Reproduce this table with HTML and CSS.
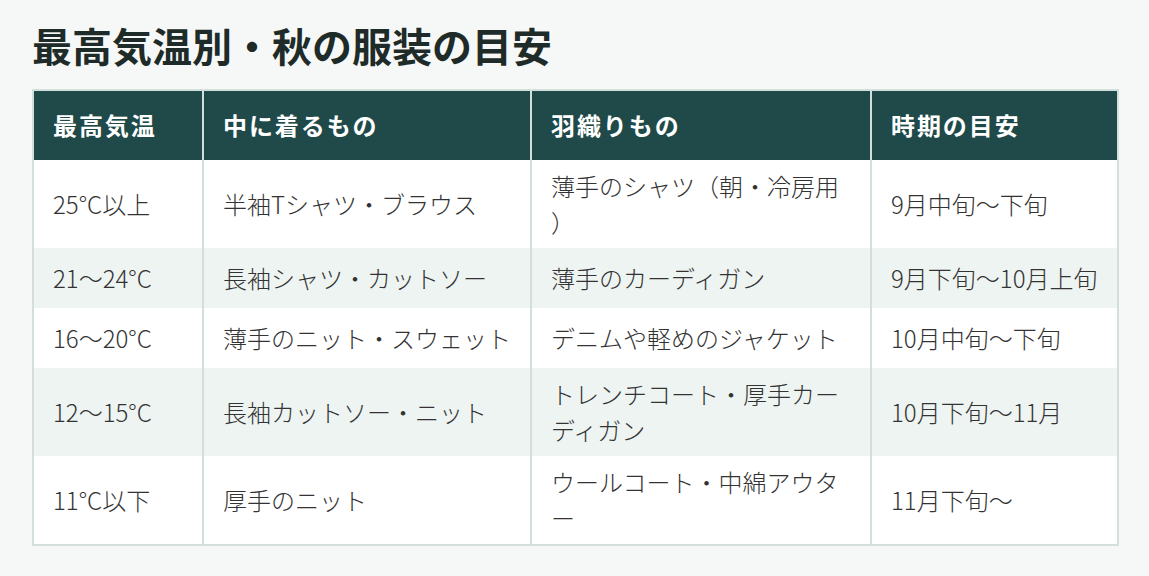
FILE: index.html
```html
<!DOCTYPE html>
<html lang="ja">
<head>
<meta charset="utf-8">
<title>最高気温別・秋の服装の目安</title>
<link rel="stylesheet" href="styles.css">
</head>
<body>
<main class="page">
  <h1 class="title">最高気温別・秋の服装の目安</h1>
  <table class="guide">
    <thead>
      <tr>
        <th class="c-temp">最高気温</th>
        <th class="c-inner">中に着るもの</th>
        <th class="c-outer">羽織りもの</th>
        <th class="c-period">時期の目安</th>
      </tr>
    </thead>
    <tbody>
      <tr>
        <td>25°C以上</td>
        <td>半袖Tシャツ・ブラウス</td>
        <td>薄手のシャツ（朝・冷房用）</td>
        <td>9月中旬〜下旬</td>
      </tr>
      <tr>
        <td>21〜24°C</td>
        <td>長袖シャツ・カットソー</td>
        <td>薄手のカーディガン</td>
        <td>9月下旬〜10月上旬</td>
      </tr>
      <tr>
        <td>16〜20°C</td>
        <td>薄手のニット・スウェット</td>
        <td>デニムや軽めのジャケット</td>
        <td>10月中旬〜下旬</td>
      </tr>
      <tr>
        <td>12〜15°C</td>
        <td>長袖カットソー・ニット</td>
        <td>トレンチコート・厚手カーディガン</td>
        <td>10月下旬〜11月</td>
      </tr>
      <tr>
        <td>11°C以下</td>
        <td>厚手のニット</td>
        <td>ウールコート・中綿アウター</td>
        <td>11月下旬〜</td>
      </tr>
    </tbody>
  </table>
</main>
</body>
</html>
```

FILE: styles.css
```css
* {
  box-sizing: border-box;
}

html, body {
  margin: 0;
  padding: 0;
  background: #f5f8f7;
}

body {
  font-family: "Noto Sans CJK JP", "Noto Sans", sans-serif;
  color: #333;
}

.page {
  padding: 21px 30px 24px 32px;
}

.title {
  margin: 0 0 20px;
  font-size: 40px;
  line-height: 1.2;
  font-weight: 700;
  letter-spacing: 0;
  color: #1f2b28;
}

.guide {
  width: 100%;
  table-layout: fixed;
  border-collapse: separate;
  border-spacing: 0;
  border: 2px solid #d3dfdb;
  background: #fff;
}

.guide th,
.guide td {
  text-align: left;
  vertical-align: middle;
  padding: 8px 19px;
  border-left: 2px solid #d3dfdb;
  line-break: anywhere;
  text-spacing-trim: space-all;
}

.guide th:first-child,
.guide td:first-child {
  border-left: 0;
}

.guide th {
  background: #1f4a49;
  color: #fff;
  font-size: 24px;
  line-height: 1.5;
  font-weight: 700;
  letter-spacing: 0.08em;
  padding-top: 16px;
  padding-bottom: 17px;
}

.guide td {
  font-size: 24px;
  line-height: 1.5;
  font-weight: 300;
  color: #333;
}

.guide tbody tr {
  height: 60px;
}

.guide tbody tr:nth-child(even) td {
  background: #eef4f2;
}

.c-temp { width: 168px; }
.c-inner { width: 328px; }
.c-outer { width: 340px; }
```
